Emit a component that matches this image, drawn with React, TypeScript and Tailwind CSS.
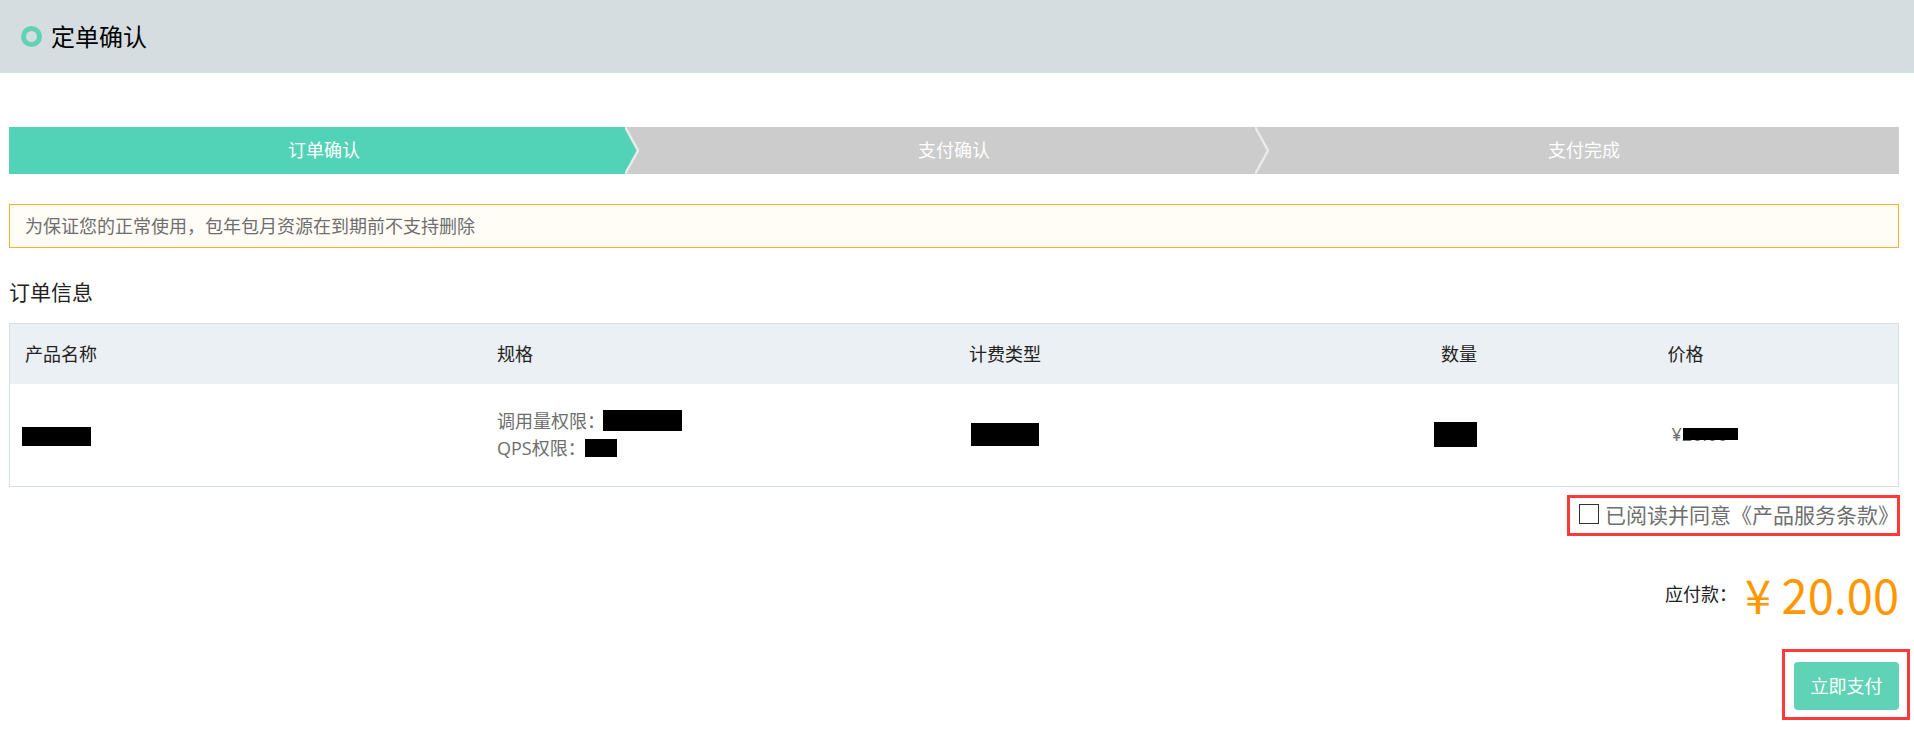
const steps = ['订单确认', '支付确认', '支付完成'];

function StepArrow({ active }: { active: boolean }) {
  return (
    <svg
      className="absolute top-0 right-0 z-10 h-full w-[14px]"
      viewBox="0 0 14 47"
      preserveAspectRatio="none"
      aria-hidden="true"
    >
      <rect width="14" height="47" fill="#ccc" />
      {active && <path d="M0 0 L13 23.5 L0 47 Z" fill="#52d3b8" />}
      <path d="M-1 -2 L13 23.5 L-1 49" fill="none" stroke="#ebebeb" strokeWidth="2.4" />
    </svg>
  );
}

function Redacted({ className }: { className: string }) {
  return <span className={`shrink-0 bg-black ${className}`} />;
}

export default function App() {
  return (
    <div className="min-h-screen bg-white font-['Open_Sans','Noto_Sans_CJK_SC',sans-serif] text-lg text-[#6e6e6e]">
      <header className="flex h-[73px] items-center gap-[9px] bg-[#d5dde0] px-[21px]">
        <span className="size-[21px] rounded-full border-5 border-[#60d3b7]" />
        <h1 className="text-2xl text-black">定单确认</h1>
      </header>

      <main className="pt-[54px] pr-[15px] pl-[9px]">
        <ol className="grid grid-cols-3 text-white">
          {steps.map((step, i) => (
            <li
              key={step}
              className={`relative flex h-[47px] items-center justify-center pb-0.5 ${i === 0 ? 'bg-[#52d3b8]' : 'bg-[#ccc]'}`}
            >
              {step}
              {i < 2 && <StepArrow active={i === 0} />}
            </li>
          ))}
        </ol>

        <p className="mt-[30px] flex h-11 items-center border border-[#fab31e] bg-[#fffdf6] px-[15px]">
          为保证您的正常使用，包年包月资源在到期前不支持删除
        </p>

        <h2 className="mt-[29px] mb-4 text-[21px] leading-[30px] text-[#222]">订单信息</h2>

        <div className="border border-[#d8e0e6]">
          <table className="w-full table-fixed text-left">
            <thead className="bg-[#ebf0f4] text-[#222]">
              <tr className="h-[60px]">
                <th className="w-[25%] px-[15px] font-normal">产品名称</th>
                <th className="w-[25%] px-[15px] font-normal">规格</th>
                <th className="w-[25%] px-[15px] font-normal">计费类型</th>
                <th className="w-[12%] px-[15px] font-normal">数量</th>
                <th className="w-[13%] px-[15px] font-normal">价格</th>
              </tr>
            </thead>
            <tbody>
              <tr className="h-[102px]">
                <td className="px-3 pt-0.5">
                  <Redacted className="block h-[19px] w-[69px]" />
                </td>
                <td className="px-[15px] pb-0.5">
                  <div className="flex h-[27px] items-center gap-2">
                    <span className="w-[98px] whitespace-nowrap">调用量权限：</span>
                    <Redacted className="h-[21px] w-[79px]" />
                  </div>
                  <div className="flex h-[27px] items-center gap-2">
                    <span className="w-20 whitespace-nowrap">QPS权限：</span>
                    <Redacted className="h-[18px] w-8" />
                  </div>
                </td>
                <td className="px-[17px] pb-0.5">
                  <Redacted className="block h-[23px] w-[68px]" />
                </td>
                <td className="px-2 pb-0.5">
                  <Redacted className="block h-[25px] w-[43px]" />
                </td>
                <td className="px-[19px] pb-0.5">
                  <span className="relative">
                    ¥20.00
                    <Redacted className="absolute top-1/2 left-[11px] h-3 w-[55px] -translate-y-1/2" />
                  </span>
                </td>
              </tr>
            </tbody>
          </table>
        </div>

        <div className="mt-2 flex justify-end">
          <div className="relative flex h-[41px] items-center">
            <label className="flex items-center gap-[6px] text-[21px]">
              <input
                type="checkbox"
                className="mb-1 size-5 appearance-none border border-[#333] bg-white checked:bg-[#60d3b7]"
              />
              已阅读并同意《产品服务条款》
            </label>
            <span className="pointer-events-none absolute inset-y-0 -right-px -left-3 border-3 border-[#ff3939]" />
          </div>
        </div>

        <div className="mt-[27px] flex h-16 items-center justify-end gap-2">
          <span className="pb-0.5 text-[#222]">应付款：</span>
          <strong className="pb-1 font-['Noto_Sans_CJK_SC',sans-serif] text-[47px] leading-none font-normal text-[#ff9800]">
            ¥ 20.00
          </strong>
        </div>

        <div className="mt-[35px] flex justify-end">
          <div className="relative">
            <button type="button" className="h-12 w-[105px] rounded bg-[#60d3b7] text-white">
              立即支付
            </button>
            <span className="pointer-events-none absolute -top-[13px] -right-[11px] -bottom-[10px] -left-3 border-3 border-[#ff3939]" />
          </div>
        </div>
      </main>
    </div>
  );
}
